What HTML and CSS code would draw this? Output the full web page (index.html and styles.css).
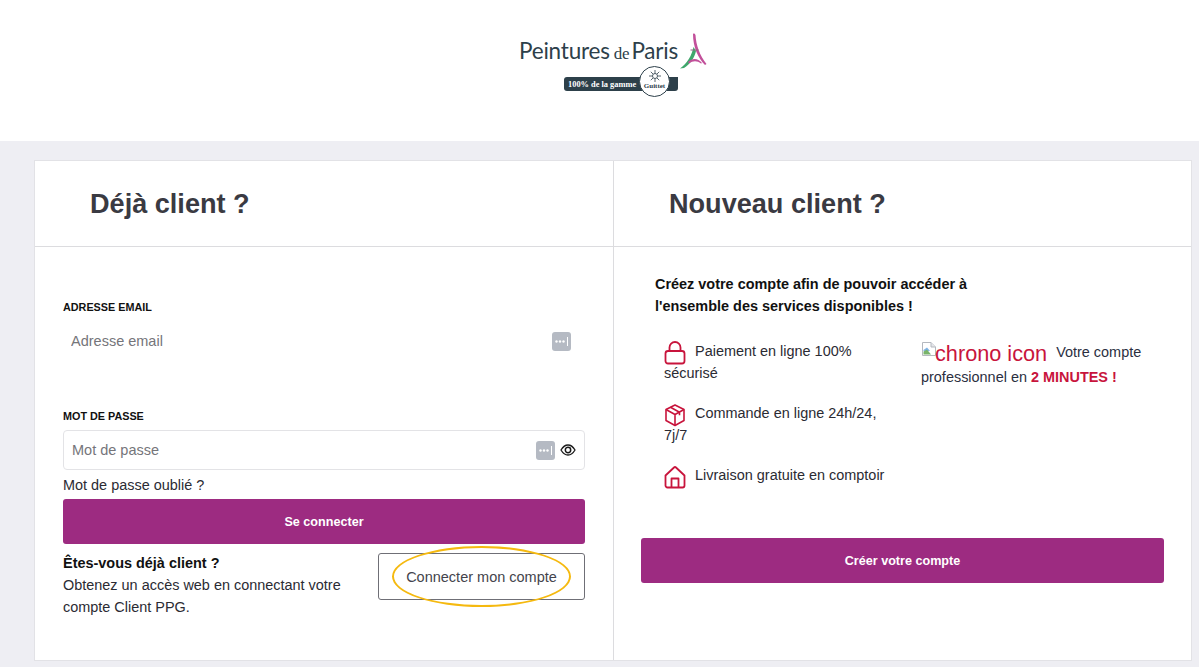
FILE: index.html
```html
<!DOCTYPE html>
<html lang="fr">
<head>
    <meta charset="UTF-8">
    <meta name="viewport" content="width=device-width, initial-scale=1.0">
    <title>Connexion - Peintures de Paris</title>
    <link rel="stylesheet" href="styles.css">
</head>
<body>
    <header class="site-header">
        <div class="logo">
            <div class="logo-top">
                <span class="logo-name">Peintures<small>de</small>Paris</span>
                <svg class="logo-tower" width="28" height="36" viewBox="0 0 28 36">
                    <path d="M14 1C15 0 16 1 16.500 2C17 12 21 23 27.500 31L26 32C19 25 14 14 14 1Z" fill="#c2509a"/>
                    <path d="M14.500 14C13 22 8 31 1 35.500L5 35C11 31 15.500 25 17 18Z" fill="#3fa66b"/>
                    <path d="M9 29C13 25 19 25 23 30L22 30.500C18 27.500 14 27.500 10 30.500Z" fill="#c2509a"/>
                    <path d="M11.500 17H19.500" stroke="#8a6a80" stroke-width="1"/>
                </svg>
            </div>
            <div class="logo-badge">
                <span class="logo-badge-text">100% de la gamme</span>
                <span class="logo-seal">
                    <svg width="12" height="12" viewBox="0 0 12 12" stroke="#2d404a" stroke-width="0.800">
                        <path d="M6 0V12M0 6H12M1.800 1.800L10.200 10.200M10.200 1.800L1.800 10.200"/>
                        <circle cx="6" cy="6" r="2.500" fill="#fff"/>
                    </svg>
                    Guittet
                </span>
            </div>
        </div>
    </header>

    <main class="panels">
        <section class="panel">
            <h2 class="panel-title">Déjà client ?</h2>
            <div class="panel-body login-body">
                <label class="field-label" for="email">ADRESSE EMAIL</label>
                <div class="field field-plain">
                    <input type="text" id="email" placeholder="Adresse email">
                    <svg class="dots-key" width="19" height="19" viewBox="0 0 19 19">
                        <rect width="19" height="19" rx="3" fill="#b5bac3"/>
                        <circle cx="4.500" cy="9.500" r="1.200" fill="#fff"/>
                        <circle cx="8" cy="9.500" r="1.200" fill="#fff"/>
                        <circle cx="11.500" cy="9.500" r="1.200" fill="#fff"/>
                        <path d="M15.500 5V14" stroke="#fff"/>
                    </svg>
                </div>

                <label class="field-label label-password" for="password">MOT DE PASSE</label>
                <div class="field field-boxed">
                    <input type="text" id="password" placeholder="Mot de passe">
                    <svg class="dots-key" width="19" height="19" viewBox="0 0 19 19">
                        <rect width="19" height="19" rx="3" fill="#b5bac3"/>
                        <circle cx="4.500" cy="9.500" r="1.200" fill="#fff"/>
                        <circle cx="8" cy="9.500" r="1.200" fill="#fff"/>
                        <circle cx="11.500" cy="9.500" r="1.200" fill="#fff"/>
                        <path d="M15.500 5V14" stroke="#fff"/>
                    </svg>
                    <svg class="eye" width="16" height="16" viewBox="0 0 16 16" fill="none" stroke="#1a1a1a">
                        <path d="M1 8C3 4.600 5.400 3 8 3s5 1.600 7 5c-2 3.400-4.400 5-7 5S3 11.400 1 8Z" stroke-width="1.300"/>
                        <circle cx="8" cy="8" r="2.700" stroke-width="1.500"/>
                    </svg>
                </div>
                <a class="forgot" href="#">Mot de passe oublié ?</a>
                <button class="btn-primary" type="button">Se connecter</button>

                <div class="link-account">
                    <div class="link-text">
                        <strong>Êtes-vous déjà client ?</strong>
                        <p>Obtenez un accès web en connectant votre compte Client PPG.</p>
                    </div>
                    <button class="btn-outline" type="button">Connecter mon compte</button>
                    <span class="highlight-ring"></span>
                </div>
            </div>
        </section>

        <section class="panel">
            <h2 class="panel-title">Nouveau client ?</h2>
            <div class="panel-body signup-body">
                <p class="intro">Créez votre compte afin de pouvoir accéder à l'ensemble des services disponibles !</p>
                <div class="benefits">
                    <ul class="benefit-list">
                        <li>
                            <svg class="benefit-icon" width="22" height="24" viewBox="0 0 22 24" fill="none" stroke="#c8143c" stroke-width="1.800" stroke-linejoin="round">
                                <path d="M5.500 10V6.500a5.500 5.500 0 0 1 11 0V10"/>
                                <rect x="1.500" y="10" width="19" height="12.500" rx="2.500"/>
                            </svg>
                            Paiement en ligne 100% sécurisé
                        </li>
                        <li>
                            <svg class="benefit-icon" width="22" height="24" viewBox="0 0 22 24" fill="none" stroke="#c8143c" stroke-width="1.600" stroke-linejoin="round">
                                <path d="M11 2l9 4.500v11L11 22.500 2 17.500v-11Z"/>
                                <path d="M2 6.500l9 5 9-5M11 11.500v11M6.500 4.200l9 5v3"/>
                            </svg>
                            Commande en ligne 24h/24, 7j/7
                        </li>
                        <li>
                            <svg class="benefit-icon" width="22" height="24" viewBox="0 0 22 24" fill="none" stroke="#c8143c" stroke-width="1.800" stroke-linejoin="round">
                                <path d="M1.500 10.500L10 2.500a1.500 1.500 0 0 1 2 0L20.500 10.500V20.500a2 2 0 0 1-2 2H3.500a2 2 0 0 1-2-2Z"/>
                                <path d="M7.500 22.500V13.500h7v9"/>
                            </svg>
                            Livraison gratuite en comptoir
                        </li>
                    </ul>
                    <p class="benefit-fast">
                        <span class="broken-img">
                            <svg width="16" height="16" viewBox="0 0 16 16">
                                <path d="M1.500 1.500H10L14.500 6V14.500H1.500Z" fill="#fff" stroke="#b4b8bf"/>
                                <path d="M10 1.500V6H14.500" fill="#e4e6ea" stroke="#b4b8bf"/>
                                <path d="M2.500 9L6 6.500 9 10H2.500Z" fill="#7fb2e8"/>
                                <path d="M2.500 13.500V10.500L6 8.500 10 13.500Z" fill="#79b36a"/>
                            </svg><span class="broken-alt">chrono icon</span></span>
                        Votre compte professionnel en <b>2 MINUTES !</b>
                    </p>
                </div>
                <button class="btn-primary" type="button">Créer votre compte</button>
            </div>
        </section>
    </main>
</body>
</html>
```

FILE: styles.css
```css
* {
    box-sizing: border-box;
}
body {
    font-family: "Liberation Sans", Arial, sans-serif;
    background-color: #eeeef3;
    color: #2b2b33;
    margin: 0;
    font-size: 14.45px;
}
.site-header {
    background-color: white;
    height: 141px;
    padding-top: 33px;
    display: flex;
    justify-content: center;
}
.logo {
    width: 188px;
    margin-left: 27px;
}
.logo-top {
    display: flex;
    align-items: flex-end;
    height: 36px;
}
.logo-name {
    width: 160px;
    font-family: Lato, sans-serif;
    font-size: 22.5px;
    letter-spacing: -0.2px;
    color: #2d404a;
    line-height: 31px;
    white-space: nowrap;
}
.logo-name small {
    font-family: "Liberation Serif", serif;
    font-size: 17px;
    margin: 0 2px 0 4px;
}
.logo-tower {
    flex-shrink: 0;
}
.logo-badge {
    position: relative;
    width: 114px;
    height: 14px;
    margin: 8px 0 0 45px;
    background-color: #2d404a;
    border-radius: 3px 0 3px 3px;
    display: flex;
    align-items: center;
    padding-left: 4px;
}
.logo-badge-text {
    font-family: "Liberation Serif", serif;
    font-size: 8.4px;
    font-weight: bold;
    color: white;
    white-space: nowrap;
}
.logo-seal {
    position: absolute;
    left: 75px;
    top: -11px;
    width: 31px;
    height: 31px;
    border: 1.500px solid #2d404a;
    border-radius: 50%;
    background-color: white;
    font-family: "Liberation Serif", serif;
    font-size: 7px;
    font-weight: bold;
    line-height: 8px;
    color: #2d404a;
    display: flex;
    flex-direction: column;
    align-items: center;
    padding-top: 3px;
}

.panels {
    display: grid;
    grid-template-columns: 578px 578px;
    margin: 19px 0 0 34px;
    width: 1158px;
    height: 501px;
    background-color: white;
    border: 1px solid #e2e2e6;
}
.panel + .panel {
    border-left: 1px solid #dcdcdf;
}
.panel-title {
    margin: 0;
    height: 86px;
    padding-left: 55px;
    line-height: 86px;
    font-size: 27.1px;
    font-weight: bold;
    color: #3a3a42;
    border-bottom: 1px solid #dcdcdf;
}
.panel-body {
    padding: 0 28px;
}
.login-body {
    padding-top: 54px;
}
.field-label {
    display: block;
    font-size: 10.8px;
    font-weight: bold;
    color: #111;
    line-height: 13px;
}
.label-password {
    margin-top: 49px;
}
.field {
    display: flex;
    align-items: center;
    height: 40px;
}
.field input {
    flex: 1;
    min-width: 0;
    padding: 0;
    border: none;
    outline: none;
    background: none;
    font-family: inherit;
    font-size: 14.5px;
    color: #333;
}
.field input::placeholder {
    color: #75757a;
}
.field-plain {
    margin-top: 7px;
    padding: 0 14px 0 8px;
}
.field-boxed {
    margin-top: 7px;
    padding: 0 8px 0 8px;
    border: 1px solid #e3e3e6;
    border-radius: 4px;
}
.dots-key {
    flex-shrink: 0;
}
.eye {
    margin-left: 5px;
}
.forgot {
    display: block;
    margin-top: 7px;
    color: #2b2b33;
    text-decoration: none;
    line-height: 16px;
}
.btn-primary {
    display: block;
    width: 100%;
    height: 45px;
    background-color: #9d2b81;
    color: white;
    border: none;
    border-radius: 3px;
    font-family: inherit;
    font-size: 12.6px;
    font-weight: bold;
}
.login-body .btn-primary {
    margin-top: 6px;
}
.link-account {
    position: relative;
    display: flex;
    justify-content: space-between;
    margin-top: 9px;
}
.link-text {
    width: 290px;
    margin-top: -1px;
    line-height: 22px;
}
.link-text strong {
    color: #111;
}
.link-text p {
    margin: 0;
}
.btn-outline {
    width: 207px;
    height: 47px;
    background-color: white;
    border: 1px solid #6f6f76;
    border-radius: 3px;
    font-family: inherit;
    font-size: 14.5px;
    color: #44444c;
}
.highlight-ring {
    position: absolute;
    left: 329px;
    top: -7px;
    width: 179px;
    height: 61px;
    border: 2px solid #f5b90f;
    border-radius: 50%;
}

.signup-body {
    padding: 26px 27px 0;
}
.intro {
    margin: 0 0 0 14px;
    width: 330px;
    font-weight: bold;
    color: #111;
    line-height: 22px;
}
.benefits {
    display: grid;
    grid-template-columns: 257px 1fr;
    margin: 23px 0 0 23px;
    min-height: 198px;
}
.benefit-list {
    list-style: none;
    margin: 0;
    padding: 0;
    width: 225px;
}
.benefit-list li {
    line-height: 22px;
    margin-bottom: 18px;
}
.benefit-icon {
    vertical-align: -5px;
    margin: -4px 5px -4px 0;
}
.benefit-fast {
    margin: 1px 0 0;
    line-height: 22px;
    color: #2b2f3f;
}
.benefit-fast b {
    color: #c8143c;
}
.broken-img {
    display: inline-block;
    vertical-align: -4px;
    margin-right: 5px;
    font-size: 21.7px;
    line-height: 24px;
    color: #c8143c;
}
.broken-img svg {
    vertical-align: 4px;
    margin-right: -2px;
}
```
